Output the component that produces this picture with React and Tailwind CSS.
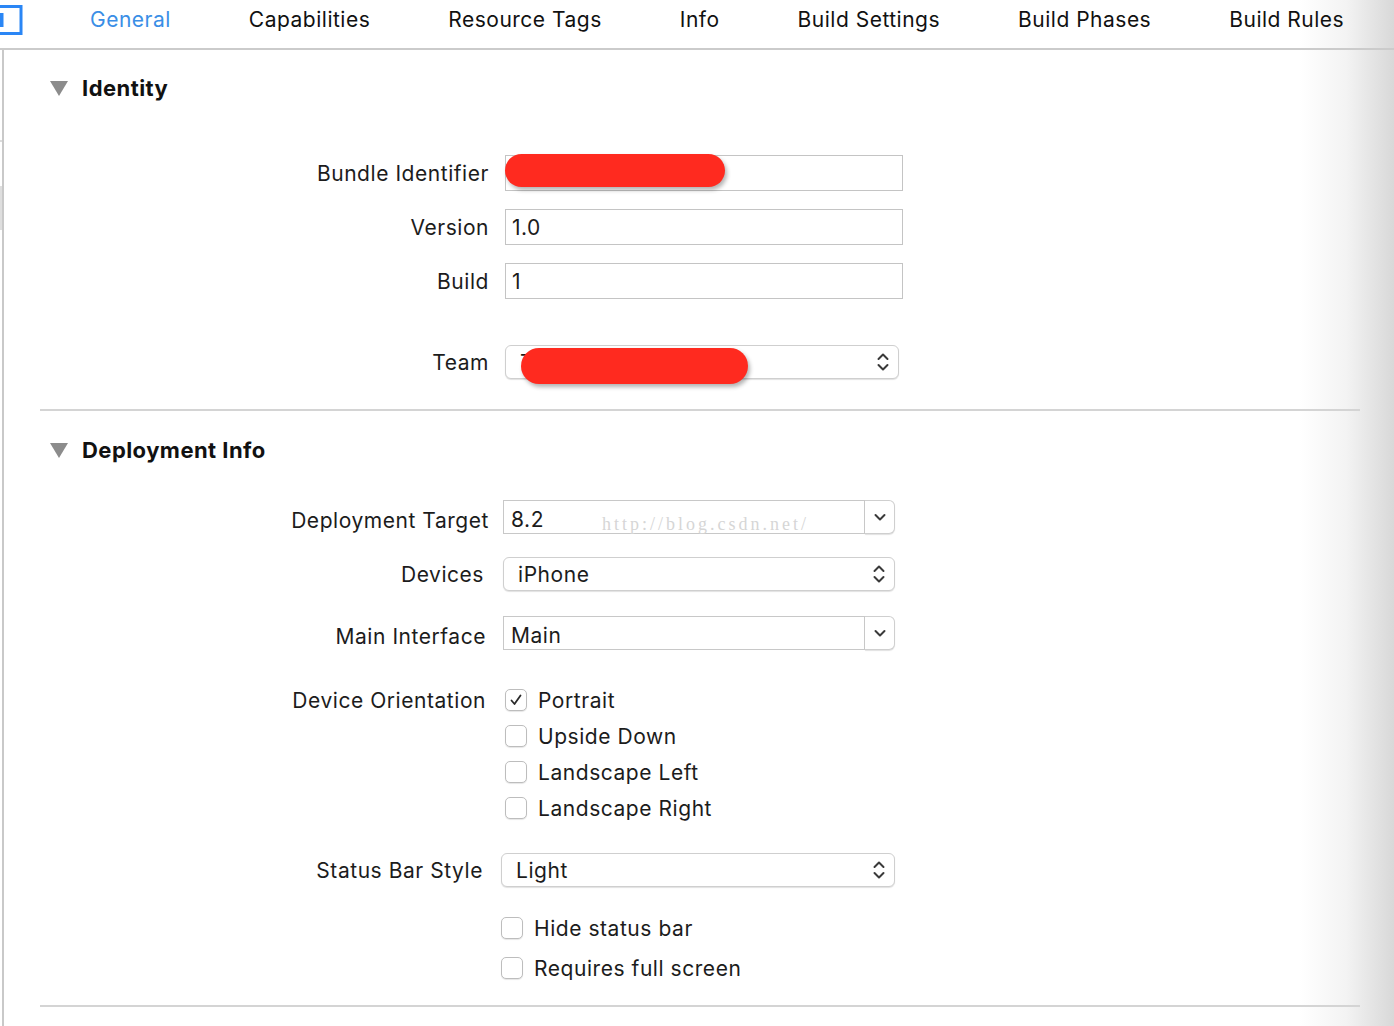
import React from "react";

const font = { fontFamily: "Inter, 'Noto Sans', sans-serif" };

function UpDown() {
  return (
    <svg width="14" height="22" viewBox="0 0 14 22" fill="none" stroke="#3a3a3a" strokeWidth="2" strokeLinecap="round" strokeLinejoin="round">
      <path d="M2.5 8 L7 3.5 L11.5 8" />
      <path d="M2.5 14 L7 18.5 L11.5 14" />
    </svg>
  );
}

function Down() {
  return (
    <svg width="14" height="10" viewBox="0 0 14 10" fill="none" stroke="#3a3a3a" strokeWidth="2" strokeLinecap="round" strokeLinejoin="round">
      <path d="M2.5 3 L7 7.5 L11.5 3" />
    </svg>
  );
}

function Row({ label, labelRight, fieldX, children, className = "", low = false }) {
  return (
    <div className={"flex items-center " + className}>
      <div
        className={"text-right shrink-0 text-[21px] tracking-[0.55px] text-[#1c1c1c] " + (low ? "translate-y-[4px]" : "translate-y-[1px]")}
        style={{ width: labelRight - 40 }}
      >
        {label}
      </div>
      <div style={{ marginLeft: fieldX - labelRight }}>{children}</div>
    </div>
  );
}

function TextField({ value, children }) {
  return (
    <div className="relative w-[398px] h-[36px] border border-[#c4c4c4] bg-white flex items-center pl-[6px] text-[21px] tracking-[0.5px] text-[#1c1c1c]">
      <span className="translate-y-[1px]">{value}</span>
      {children}
    </div>
  );
}

function Popup({ value, w = 394, children }) {
  return (
    <div className="relative h-[34px] border border-[#cfcfcf] rounded-[6px] bg-white shadow-[0_1px_1px_rgba(0,0,0,0.12)] flex items-center justify-between pl-[14px] pr-[8px] text-[21px] tracking-[0.55px] text-[#1c1c1c]" style={{ width: w }}>
      <span className="translate-y-[1px]">{value}</span>
      <UpDown />
      {children}
    </div>
  );
}

function Combo({ value, children }) {
  return (
    <div className="relative w-[392px] h-[34px] flex">
      <div className="relative flex-1 border border-[#c8c8c8] bg-white flex items-center pl-[7px] text-[21px] tracking-[0.55px] text-[#1c1c1c]">
        <span className="translate-y-[3px]">{value}</span>
        {children}
      </div>
      <div className="w-[30px] border border-l-0 border-[#cfcfcf] rounded-r-[6px] bg-white shadow-[0_1px_1px_rgba(0,0,0,0.12)] flex items-center justify-center">
        <Down />
      </div>
    </div>
  );
}

function Check({ checked, label }) {
  return (
    <div className="flex items-center h-[36px] text-[21px] tracking-[0.55px] text-[#1c1c1c]">
      <div className="w-[22px] h-[22px] border border-[#bdbdbd] rounded-[5px] bg-white shadow-[0_1px_1px_rgba(0,0,0,0.1)] flex items-center justify-center">
        {checked && (
          <svg width="14" height="14" viewBox="0 0 14 14" fill="none" stroke="#2a2a2a" strokeWidth="1.8" strokeLinecap="round" strokeLinejoin="round">
            <path d="M2.5 7.5 L5.5 11 L11.5 2.5" />
          </svg>
        )}
      </div>
      <span className="ml-[11px] translate-y-[1px]">{label}</span>
    </div>
  );
}

function Header({ title }) {
  return (
    <div className="flex items-center h-[36px]">
      <svg className="ml-[10px]" width="18" height="15" viewBox="0 0 18 15">
        <path d="M0 0 L18 0 L9 15 Z" fill="#8c8c8c" />
      </svg>
      <span className="ml-[14px] text-[22px] font-bold tracking-[0.45px] text-[#111]">{title}</span>
    </div>
  );
}

function RedBlob({ className }) {
  return <div className={"absolute bg-[#ff2a1f] rounded-full shadow-[2px_3px_4px_rgba(0,0,0,0.3)] " + className} />;
}

export default function App() {
  const tabs = ["General", "Capabilities", "Resource Tags", "Info", "Build Settings", "Build Phases", "Build Rules"];
  return (
    <div className="relative w-[1394px] h-[1026px] overflow-hidden bg-white" style={font}>
      {/* sombra da borda direita (atrás do conteúdo) */}
      <div className="pointer-events-none absolute right-0 top-0 bottom-0 w-[95px] bg-gradient-to-r from-white via-[#f3f3f3] to-[#d8d8d8]" />

      <div className="relative">
        {/* barra de abas */}
        <div className="relative h-[50px] border-b-2 border-[#cbcbcb] flex items-center">
          <svg className="absolute left-0 top-[5px]" width="24" height="30" viewBox="0 0 24 30">
            <rect x="-2" y="1.5" width="23" height="27" fill="none" stroke="#2a86f5" strokeWidth="3" />
            <rect x="0" y="8" width="3.5" height="14" fill="#2a86f5" />
          </svg>
          <div className="flex gap-[78px] pl-[90px] pb-[8px] text-[21px] tracking-[0.5px]">
            {tabs.map((t, i) => (
              <span key={t} className={i === 0 ? "text-[#3a8ee6]" : "text-[#111]"}>{t}</span>
            ))}
          </div>
        </div>

        <div className="pl-[40px] pr-[34px]">
          {/* Identity */}
          <div className="pt-[20px]">
            <Header title="Identity" />
            <div className="mt-[49px] flex flex-col gap-[18px]">
              <Row label="Bundle Identifier" labelRight={489} fieldX={505}>
                <TextField value="">
                  <RedBlob className="left-[-1px] top-[-2px] w-[220px] h-[33px]" />
                </TextField>
              </Row>
              <Row label="Version" labelRight={489} fieldX={505}>
                <TextField value="1.0" />
              </Row>
              <Row label="Build" labelRight={489} fieldX={505}>
                <TextField value="1" />
              </Row>
            </div>
            <Row label="Team" labelRight={489} fieldX={505} className="mt-[46px]">
              <Popup value="T" w={394}>
                <RedBlob className="left-[15px] top-[2px] w-[227px] h-[36px]" />
              </Popup>
            </Row>
          </div>
          <div className="mt-[30px] h-[2px] bg-[#d4d4d4]" />

          {/* Deployment Info */}
          <div className="pt-[21px]">
            <Header title="Deployment Info" />
            <Row label="Deployment Target" labelRight={489} fieldX={503} className="mt-[32px]" low>
              <Combo value="8.2">
                <span
                  className="absolute left-[98px] top-[10px] text-[18px] tracking-[3px] text-[#d6d6d6]"
                  style={{ fontFamily: "'Liberation Serif', serif" }}
                >
                  http://blog.csdn.net/
                </span>
              </Combo>
            </Row>
            <Row label="Devices" labelRight={484} fieldX={503} className="mt-[23px]">
              <Popup value="iPhone" w={392} />
            </Row>
            <Row label="Main Interface" labelRight={486} fieldX={503} className="mt-[25px]" low>
              <Combo value="Main" />
            </Row>
            <div className="mt-[32px] flex">
              <div className="text-right text-[21px] tracking-[0.55px] text-[#1c1c1c] h-[36px] flex items-center justify-end" style={{ width: 446 }}>
                <span className="translate-y-[1px]">Device Orientation</span>
              </div>
              <div className="ml-[19px] flex flex-col">
                <Check checked label="Portrait" />
                <Check label="Upside Down" />
                <Check label="Landscape Left" />
                <Check label="Landscape Right" />
              </div>
            </div>
            <Row label="Status Bar Style" labelRight={483} fieldX={501} className="mt-[27px]">
              <Popup value="Light" w={394} />
            </Row>
            <div className="mt-[23px] pl-[461px] flex flex-col gap-[4px]">
              <Check label="Hide status bar" />
              <Check label="Requires full screen" />
            </div>
          </div>
          <div className="mt-[19px] h-[2px] bg-[#d4d4d4]" />
        </div>
      </div>

      {/* linha lateral esquerda */}
      <div className="absolute left-[2px] top-[50px] bottom-0 w-[2px] bg-[#c9c9c9]" />
      <div className="absolute left-0 top-[140px] w-[2px] h-[2px] bg-[#dcdcdc]" />
      <div className="absolute left-0 top-[186px] w-[2px] h-[44px] bg-[#dedede]" />
    </div>
  );
}
